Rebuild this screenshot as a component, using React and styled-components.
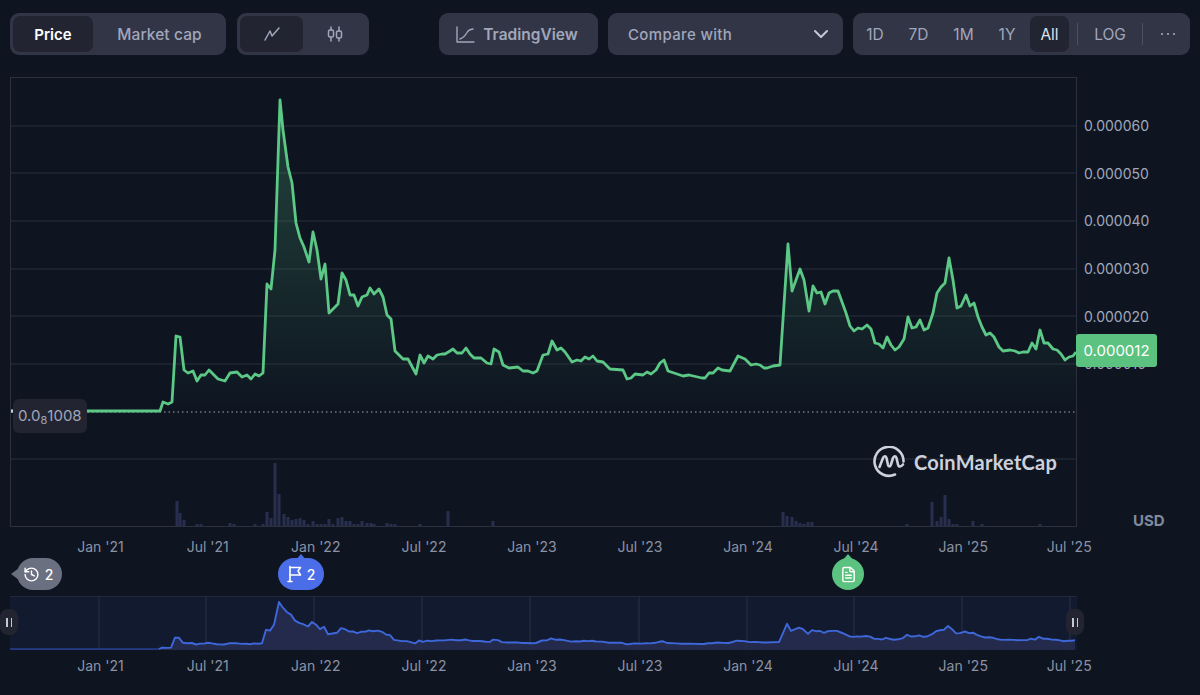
import React from 'react';
import styled, { createGlobalStyle } from 'styled-components';
import { ChevronDown, FileText, History } from 'lucide-react';

const GlobalStyle = createGlobalStyle`
  html, body {
    margin: 0;
    padding: 0;
    background: #0e1521;
    font-family: Inter, "Liberation Sans", sans-serif;
  }
`;

// chart points, in page pixels
const PRICE = [
  [11, 411], [160, 411], [163, 402], [168, 404], [172, 402], [176, 336], [180, 337], [184, 370], [188, 373], [193, 371],
  [197, 381], [201, 375], [205, 375], [209, 370], [213, 374], [218, 379], [225, 381], [230, 373], [237, 372], [242, 377],
  [247, 375], [251, 379], [255, 374], [259, 376], [263, 373], [267, 284], [271, 289], [275, 250], [280, 100], [283, 130],
  [288, 167], [292, 183], [296, 223], [300, 238], [304, 247], [309, 262], [313, 232], [317, 250], [321, 279], [325, 264],
  [329, 313], [338, 304], [342, 273], [346, 280], [350, 295], [354, 295], [358, 306], [362, 297], [367, 295], [370, 288],
  [374, 294], [379, 289], [383, 297], [387, 315], [391, 319], [395, 351], [403, 359], [408, 359], [416, 374], [420, 355],
  [424, 363], [428, 356], [433, 359], [437, 355], [442, 354], [445, 354], [450, 351], [453, 349], [457, 353], [462, 353],
  [466, 348], [470, 354], [474, 358], [481, 358], [487, 363], [491, 364], [494, 349], [499, 352], [503, 365], [509, 368],
  [518, 367], [523, 371], [528, 371], [533, 373], [537, 371], [543, 355], [548, 354], [552, 341], [557, 350], [561, 348],
  [565, 352], [572, 362], [577, 360], [581, 361], [585, 357], [589, 359], [593, 356], [597, 361], [603, 362], [610, 369],
  [623, 370], [627, 379], [631, 378], [635, 374], [643, 375], [647, 372], [651, 374], [656, 370], [660, 363], [664, 360],
  [668, 371], [677, 374], [683, 376], [689, 375], [702, 378], [705, 378], [709, 373], [713, 373], [718, 368], [722, 370],
  [730, 371], [738, 356], [745, 359], [751, 365], [756, 364], [760, 365], [764, 368], [767, 368], [773, 366], [780, 365],
  [788, 244], [792, 291], [800, 269], [804, 280], [809, 311], [813, 286], [817, 293], [821, 292], [825, 304], [829, 293],
  [833, 291], [838, 291], [842, 302], [846, 313], [850, 326], [854, 331], [858, 328], [862, 329], [867, 325], [871, 329],
  [875, 343], [879, 344], [883, 348], [887, 337], [891, 345], [895, 350], [899, 347], [904, 339], [908, 317], [912, 328],
  [916, 327], [920, 320], [924, 330], [928, 328], [933, 313], [937, 293], [941, 287], [945, 283], [949, 258], [953, 280],
  [957, 308], [961, 306], [966, 295], [970, 306], [974, 303], [978, 317], [982, 327], [986, 335], [990, 333], [994, 337],
  [999, 347], [1003, 351], [1010, 350], [1015, 351], [1019, 353], [1023, 352], [1028, 352], [1032, 343], [1036, 349], [1040, 330],
  [1044, 343], [1048, 343], [1053, 349], [1057, 350], [1061, 354], [1065, 360], [1069, 357], [1073, 356], [1076, 352],
];

// [x, top of bar]
const VOLUME = [
  [177, 501], [180, 513], [184, 520], [197, 524], [201, 524], [230, 523], [234, 524], [255, 524], [263, 524], [267, 512],
  [271, 518], [275, 463], [279, 494], [284, 514], [288, 517], [292, 520], [296, 519], [300, 518], [304, 520], [308, 524],
  [313, 521], [317, 524], [321, 524], [325, 524], [329, 519], [333, 524], [338, 518], [342, 517], [346, 521], [350, 521],
  [354, 524], [358, 524], [362, 521], [367, 523], [371, 523], [374, 524], [387, 523], [391, 524], [395, 524], [420, 524],
  [448, 511], [493, 521], [783, 512], [787, 516], [792, 517], [796, 521], [800, 523], [804, 524], [808, 522], [812, 522],
  [907, 524], [932, 502], [937, 521], [941, 517], [945, 495], [949, 519], [953, 524], [957, 524], [973, 521], [982, 524],
  [1040, 524],
];

const GRID_Y = [126, 173, 221, 269, 316, 364, 459];
const NAV_GRID_X = [100, 207, 315, 423, 531, 640, 748, 855, 963, 1071];
const Y_LABELS = ['0.000060', '0.000050', '0.000040', '0.000030', '0.000020', '0.000010'];
const X_LABELS = ["Jan '21", "Jul '21", "Jan '22", "Jul '22", "Jan '23", "Jul '23", "Jan '24", "Jul '24", "Jan '25", "Jul '25"];

const toPoints = (list) => list.map(([x, y]) => `${x},${y}`).join(' ');
const NAV_LINE = PRICE.map(([x, y]) => [x, +(649 - (411 - y) * 0.151).toFixed(1)]);

const Page = styled.div`
  width: 1200px;
  height: 695px;
  box-sizing: border-box;
  padding: 13px 0 0 10px;
  overflow: hidden;
  background: #0e1521;
`;

const Toolbar = styled.div`
  display: flex;
  height: 42px;
  margin-bottom: 22px;
`;

const Group = styled.div`
  display: flex;
  align-items: center;
  box-sizing: border-box;
  flex-shrink: 0;
  width: ${(p) => p.$width}px;
  margin-left: ${(p) => p.$gap}px;
  padding: 3px;
  border-radius: 9px;
  background: #323546;
`;

const SegButton = styled.div`
  display: flex;
  align-items: center;
  justify-content: center;
  flex-shrink: 0;
  width: ${(p) => p.$width}px;
  height: 36px;
  border-radius: 7px;
  font-size: 15px;
  font-weight: 600;
  color: ${(p) => (p.$active ? '#ffffff' : '#a1a7bb')};
  background: ${(p) => (p.$active ? '#222531' : 'transparent')};
`;

const MarketLabel = styled.span`
  font-size: 15.5px;
  font-weight: 500;
  letter-spacing: 0.1px;
`;

const RangeButton = styled(SegButton)`
  font-size: 15.5px;
  font-weight: 400;
  color: ${(p) => (p.$active ? '#dfe2ea' : '#a1a7bb')};
`;

const TvButton = styled(Group)`
  justify-content: center;
  gap: 8px;
  padding: 0 3px 0 0;
  font-size: 15.5px;
  font-weight: 600;
  color: #a1a7bb;
`;

const CompareBox = styled(Group)`
  justify-content: space-between;
  padding: 0 10px 0 20px;
  font-size: 15px;
  font-weight: 500;
  letter-spacing: 0.35px;
  color: #a1a7bb;
`;

const Separator = styled.div`
  flex-shrink: 0;
  width: 1px;
  height: 22px;
  margin-left: ${(p) => p.$gap || 0}px;
  background: #4b4f62;
`;

const ChartRow = styled.div`
  display: flex;
  height: 450px;
`;

const ChartBox = styled.div`
  position: relative;
  box-sizing: border-box;
  width: 1067px;
  height: 450px;
  border: 1px solid #2b2f3e;
`;

const ChartSvg = styled.svg`
  display: block;
`;

const MinLabel = styled.div`
  position: absolute;
  left: 2px;
  top: 321px;
  box-sizing: border-box;
  width: 74px;
  height: 34px;
  padding-left: 5px;
  border-radius: 6px;
  background: #222531;
  font-size: 15px;
  line-height: 33px;
  color: #a1a7bb;

  sub {
    font-size: 11px;
    vertical-align: -3px;
    line-height: 0;
  }
`;

const Logo = styled.div`
  position: absolute;
  left: 862px;
  top: 368px;
  display: flex;
  align-items: center;
  gap: 9px;
  font-family: Lato, sans-serif;
  font-size: 20px;
  font-weight: 700;
  letter-spacing: 0.25px;
  color: #cdd1dc;
`;

const YAxis = styled.div`
  position: relative;
  display: flex;
  flex-direction: column;
  width: 123px;
  padding-top: 25px;
  box-sizing: border-box;
`;

const YLabel = styled.div`
  display: flex;
  align-items: center;
  height: 47.6px;
  padding-left: 7px;
  font-size: 14px;
  color: #a1a7bb;
`;

const PriceBadge = styled.div`
  position: absolute;
  left: -1px;
  top: 257px;
  display: flex;
  align-items: center;
  justify-content: center;
  width: 81px;
  height: 33px;
  border-radius: 3px;
  background: #5bc27f;
  font-size: 15px;
  color: #ffffff;
`;

const Currency = styled.div`
  margin: auto 0 0 56px;
  height: 13px;
  line-height: 13px;
  font-size: 15px;
  font-weight: 700;
  color: #808a9d;
`;

const XAxis = styled.div`
  display: grid;
  grid-template-columns: 107px 107.5px 108.5px 108px 108px 108px 108px 108px 106.5px 105.5px;
  align-items: center;
  height: ${(p) => p.$height}px;
  margin-left: 37px;
`;

const XLabel = styled.div`
  text-align: center;
  font-size: 14px;
  color: #8c92a5;
`;

const PinRow = styled.div`
  position: relative;
  height: 31px;
`;

const Pin = styled.div`
  position: absolute;
  left: ${(p) => p.$left}px;
  top: -7px;
  display: flex;
  align-items: center;
  justify-content: center;
  gap: 5px;
  box-sizing: border-box;
  width: ${(p) => p.$width}px;
  height: 32px;
  border-radius: 16px;
  background: ${(p) => p.$color};
  font-size: 14px;
  font-weight: 500;
  color: #ffffff;

  &::before {
    content: '';
    position: absolute;
    left: 50%;
    top: -4px;
    margin-left: -6px;
    border-left: 6px solid transparent;
    border-right: 6px solid transparent;
    border-bottom: 7px solid ${(p) => p.$color};
  }
`;

const HistoryPin = styled(Pin)`
  padding-right: 3px;

  &::before {
    left: -6px;
    top: 10px;
    margin-left: 0;
    border-top: 6px solid transparent;
    border-bottom: 6px solid transparent;
    border-left: 0;
    border-right: 8px solid ${(p) => p.$color};
  }
`;

const Navigator = styled.div`
  position: relative;
  box-sizing: border-box;
  width: 1067px;
  height: 54px;
  border-top: 1px solid #23283a;
  background: #121a2f;
`;

const Handle = styled.div`
  position: absolute;
  left: ${(p) => p.$left}px;
  top: 12px;
  display: flex;
  align-items: center;
  justify-content: center;
  gap: 3px;
  width: 18px;
  height: 26px;
  border-radius: 8px;
  background: #222531;

  &::before, &::after {
    content: '';
    width: 1.5px;
    height: 9px;
    background: #c3c8d6;
  }
`;

const LineIcon = () => (
  <svg width="18" height="18" viewBox="0 0 18 18" fill="none" stroke="#a1a7bb" strokeWidth="1.5" strokeLinecap="round" strokeLinejoin="round">
    <path d="M2 15 L7 6 L9 11 L16 3" />
  </svg>
);

const CandleIcon = () => (
  <svg width="18" height="18" viewBox="0 0 18 18" fill="none" stroke="#a1a7bb" strokeWidth="1.5" strokeLinecap="round">
    <path d="M5 2v3M5 12v4M13 2v4M13 13v3" />
    <rect x="2.5" y="5" width="5" height="7" rx="1.6" />
    <rect x="10.5" y="6" width="5" height="7" rx="1.6" />
  </svg>
);

const TvIcon = () => (
  <svg width="19" height="17" viewBox="0 0 19 17" fill="none" stroke="#a1a7bb" strokeWidth="1.4" strokeLinecap="round" strokeLinejoin="round">
    <path d="M1 1v15h17" />
    <path d="M4 13c3-1 5-3 7-6.500 1-2 2.500-3 6-3.500" />
  </svg>
);

const FlagIcon = () => (
  <svg width="15" height="18" viewBox="0 0 15 18" fill="none" stroke="#ffffff" strokeWidth="1.6" strokeLinecap="round" strokeLinejoin="round">
    <path d="M3 1.500V16.500M1 16.500h4" />
    <path d="M3 2.500h10.500L11 6l2.500 4H3" />
  </svg>
);

const DotsIcon = () => (
  <svg width="16" height="4" viewBox="0 0 16 4" fill="#a1a7bb">
    <circle cx="2" cy="2" r="1.100" />
    <circle cx="8" cy="2" r="1.100" />
    <circle cx="14" cy="2" r="1.100" />
  </svg>
);

const LogoMark = () => (
  <svg width="32" height="32" viewBox="0 0 32 32" fill="none" stroke="#cdd1dc" strokeWidth="2.6" strokeLinecap="round" strokeLinejoin="round">
    <path d="M22 28.500A14.500 14.500 0 1 1 30.500 15.500" />
    <path d="M6.500 21 L10 12 C11 9.500 13 10 13.500 12 L15 19 C15.500 21 17 21 17.800 19 L20 12 C21 9.500 23 10 23.500 12 L25 18.500 C25.600 21.500 28 21 30 18.500" />
  </svg>
);

const PriceChart = () => (
  <ChartSvg width="1065" height="448" viewBox="11 78 1065 448">
    <defs>
      <linearGradient id="priceFill" gradientUnits="userSpaceOnUse" x1="0" y1="180" x2="0" y2="412">
        <stop offset="0" stopColor="#5dc887" stopOpacity="0.2" />
        <stop offset="1" stopColor="#5dc887" stopOpacity="0" />
      </linearGradient>
    </defs>
    {GRID_Y.map((y) => (
      <line key={y} x1="11" x2="1076" y1={y} y2={y} stroke="#2b2f3c" strokeWidth="1.2" />
    ))}
    <polygon points={`${toPoints(PRICE)} 1076,412 11,412`} fill="url(#priceFill)" />
    {VOLUME.map(([x, top]) => (
      <rect key={x} x={x - 1.5} y={top} width="3" height={526 - top} fill="#282e4e" />
    ))}
    <line x1="11" x2="1076" y1="412" y2="412" stroke="#a1a7bb" strokeWidth="1" strokeDasharray="1.500 3" />
    <polyline points={toPoints(PRICE)} fill="none" stroke="#5cc886" strokeWidth="2.8" strokeLinejoin="round" />
    <circle cx="12" cy="411" r="1.500" fill="#c8ccd8" />
  </ChartSvg>
);

const NavChart = () => (
  <ChartSvg width="1065" height="53" viewBox="11 597 1065 53">
    <polygon points={`${toPoints(NAV_LINE)} 1076,650 11,650`} fill="#232a4c" />
    {NAV_GRID_X.map((x) => (
      <line key={x} x1={x} x2={x} y1="597" y2="650" stroke="#2a2f45" strokeWidth="1" />
    ))}
    <line x1="11" x2="160" y1="649" y2="649" stroke="#27408f" strokeWidth="1.4" />
    <polyline points={toPoints(NAV_LINE.slice(1))} fill="none" stroke="#3e67d9" strokeWidth="1.9" strokeLinejoin="round" />
  </ChartSvg>
);

const Axis = ({ height }) => (
  <XAxis $height={height}>
    {X_LABELS.map((label) => (
      <XLabel key={label}>{label}</XLabel>
    ))}
  </XAxis>
);

export default function App() {
  return (
    <Page>
      <GlobalStyle />
      <Toolbar>
        <Group $width={216} $gap={0}>
          <SegButton $width={80} $active>Price</SegButton>
          <SegButton $width={133}><MarketLabel>Market cap</MarketLabel></SegButton>
        </Group>
        <Group $width={132} $gap={11}>
          <SegButton $width={63} $active><LineIcon /></SegButton>
          <SegButton $width={63}><CandleIcon /></SegButton>
        </Group>
        <TvButton $width={159} $gap={70}>
          <TvIcon />
          TradingView
        </TvButton>
        <CompareBox $width={235} $gap={10}>
          Compare with
          <ChevronDown size={24} color="#c3c8d6" strokeWidth={2} />
        </CompareBox>
        <Group $width={337} $gap={10}>
          <RangeButton $width={38}>1D</RangeButton>
          <RangeButton $width={49}>7D</RangeButton>
          <RangeButton $width={41}>1M</RangeButton>
          <RangeButton $width={46}>1Y</RangeButton>
          <RangeButton $width={39} $active>All</RangeButton>
          <Separator $gap={8} />
          <RangeButton $width={64}>LOG</RangeButton>
          <Separator />
          <RangeButton $width={50}><DotsIcon /></RangeButton>
        </Group>
      </Toolbar>

      <ChartRow>
        <ChartBox>
          <PriceChart />
          <MinLabel>0.0<sub>8</sub>1008</MinLabel>
          <Logo>
            <LogoMark />
            CoinMarketCap
          </Logo>
        </ChartBox>
        <YAxis>
          {Y_LABELS.map((label) => (
            <YLabel key={label}>{label}</YLabel>
          ))}
          <PriceBadge>0.000012</PriceBadge>
          <Currency>USD</Currency>
        </YAxis>
      </ChartRow>

      <Axis height={38} />

      <PinRow>
        <HistoryPin $left={7} $width={45} $color="#6b7080">
          <History size={17} />
          2
        </HistoryPin>
        <Pin $left={268} $width={46} $color="#4b6ee8">
          <FlagIcon />
          2
        </Pin>
        <Pin $left={822} $width={32} $color="#5bc27f">
          <FileText size={17} />
        </Pin>
      </PinRow>

      <Navigator>
        <NavChart />
        <Handle $left={-10} />
        <Handle $left={1056} />
      </Navigator>

      <Axis height={30} />
    </Page>
  );
}
